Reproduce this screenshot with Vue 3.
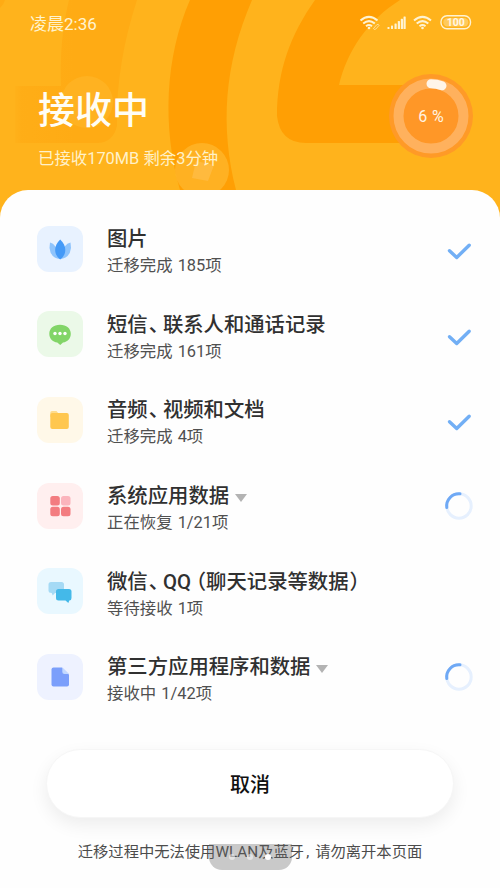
<script setup>
const items = [
  { icon: 'photo', bg: '#e8f2ff', title: ['图片'], sub: '迁移完成 185项', state: 'done' },
  { icon: 'chat', bg: '#ebf9e8', title: ['短信', '、', '联系人和通话记录'], sub: '迁移完成 161项', state: 'done' },
  { icon: 'folder', bg: '#fff8e8', title: ['音频', '、', '视频和文档'], sub: '迁移完成 4项', state: 'done' },
  { icon: 'apps', bg: '#ffefef', title: ['系统应用数据'], sub: '正在恢复 1/21项', state: 'busy', more: true },
  { icon: 'wechat', bg: '#e9f8ff', title: ['微信', '、', 'QQ', '（', '聊天记录等数据', '）'], sub: '等待接收 1项', state: '' },
  { icon: 'file', bg: '#eef2ff', title: ['第三方应用程序和数据'], sub: '接收中 1/42项', state: 'busy', more: true }
]
const partClass = (p) => ({ comma: p === '、', open: p === '（', close: p === '）' })
</script>

<template>
  <main class="screen">
    <header class="hero">
      <svg class="art" viewBox="0 0 500 220" aria-hidden="true">
        <defs>
          <linearGradient id="band" gradientUnits="userSpaceOnUse" x1="12" y1="0" x2="75" y2="0">
            <stop offset="0" stop-color="#ffab14" stop-opacity="0" />
            <stop offset=".15" stop-color="#ffab14" stop-opacity=".7" />
            <stop offset="1" stop-color="#ffab14" />
          </linearGradient>
        </defs>
        <path d="M69 0C62 28 60 55 61 86H15V143H97Q113 143 117 126C116 83 124 40 137 0Z" fill="url(#band)" />
        <path d="M190 0C165 57 162 127 180 190L184 220H250L236 190C220 127 224 65 252 0Z" fill="#ff9f04" />
        <path d="M315 0C291 34 277 70 277 116Q280 143 306 143H430V85H339C347 51 368 20 400 0Z" fill="#ff9f04" />
        <path d="M0 8Q4 4 5 0H0Z" fill="#ffab14" />
        <circle cx="87" cy="102" r="26" fill="#ffb82c" opacity=".55" />
        <circle cx="202" cy="170" r="27" fill="#ffb52b" opacity=".8" />
        <path d="M196 161L214 165L208 181L192 178Z" fill="#ffc45a" opacity=".5" />
      </svg>
      <div class="status">
        <span class="time">凌晨2:36</span>
        <svg class="signals" width="114" height="18" viewBox="0 0 114 18" fill="none" stroke="#fff3d2">
          <g stroke-width="2">
            <path d="M1.500 6.500Q10 -.8 18.500 6.500" /><path d="M4.200 9.500Q10 4.700 15.800 9.500" /><path d="M7 12.200Q10 10 13 12.200" />
          </g>
          <circle cx="10" cy="14" r="1.300" fill="#fff3d2" stroke="none" />
          <path d="M14.500 14.500l3.300-3.800q1.800-1 2.300.6l-3.300 3.800q-2 .9-2.300-.6" stroke-width="1" opacity=".65" />
          <g fill="#fff3d2" stroke="none">
            <rect x="28.500" y="13" width="2" height="2" rx=".6" /><rect x="32" y="11.500" width="2" height="3.500" rx=".6" />
            <rect x="35.500" y="9.500" width="2.200" height="5.500" rx=".6" /><rect x="38.800" y="7" width="2.200" height="8" rx=".6" />
            <rect x="41.800" y="4.800" width="2.200" height="10.200" rx=".6" /><rect x="44.500" y="2.500" width="2.200" height="12.500" rx=".6" />
          </g>
          <g stroke-width="2">
            <path d="M55 6.500Q63.500 -.8 72 6.500" /><path d="M57.700 9.500Q63.500 4.700 69.300 9.500" /><path d="M60.500 12.200Q63.500 10 66.500 12.200" />
          </g>
          <circle cx="63.500" cy="14" r="1.300" fill="#fff3d2" stroke="none" />
          <rect x="82" y="1.800" width="29.500" height="13" rx="6" stroke-width="1.400" />
          <rect x="84.300" y="4" width="25" height="8.600" rx="4.200" fill="#ffdc92" opacity=".55" stroke="none" />
          <text x="96.800" y="12.200" class="batt" text-anchor="middle" fill="#fff8e6" stroke="none">100</text>
        </svg>
      </div>
      <div class="summary">
        <div>
          <h1>接收中</h1>
          <p>已接收170MB 剩余3分钟</p>
        </div>
        <svg class="ring" width="86" height="86" viewBox="0 0 86 86">
          <circle cx="43" cy="43" r="42" fill="#ff9a27" />
          <circle cx="43" cy="43" r="32.500" fill="#ff9727" stroke="#ffb15d" stroke-width="10" />
          <path d="M43 10.800A32.200 32.200 0 0 1 54 12.800" fill="none" stroke="#fff5e9" stroke-width="9" stroke-linecap="round" />
          <text x="43" y="48.500" text-anchor="middle" class="pct">6 %</text>
        </svg>
      </div>
    </header>

    <section class="sheet">
      <ul>
        <li v-for="it in items" :key="it.icon">
          <div class="tile" :style="{ background: it.bg }">
            <svg width="46" height="46" viewBox="0 0 46 46">
              <g v-if="it.icon === 'photo'">
                <path d="M13 16.500Q20 18 23 33Q13.500 32 12.500 22Z" fill="#8fc4fc" />
                <path d="M33.500 16.500Q26 18 23 33Q33 32 34 22Z" fill="#8fc4fc" />
                <path d="M23.200 13.500C16.500 20 16.500 28 23.200 33.500C30 28 30 20 23.200 13.500Z" fill="#459af7" />
              </g>
              <g v-else-if="it.icon === 'chat'">
                <path d="M23 13.700C29.500 13.700 33.800 17.500 33.800 22.700C33.800 27.500 30.500 30.800 26 31.500L23.200 34L20.300 31.500C15.500 30.800 12.300 27.500 12.300 22.700C12.300 17.500 16.500 13.700 23 13.700Z" fill="#82d568" />
                <circle cx="18" cy="22.500" r="1.700" fill="#fff" /><circle cx="23" cy="22.500" r="1.700" fill="#fff" /><circle cx="28" cy="22.500" r="1.700" fill="#fff" />
              </g>
              <g v-else-if="it.icon === 'folder'">
                <path d="M13.300 15.500Q13.300 14 15 14H19.500L21.500 16.500H28V20H13.300Z" fill="#ffdc8d" />
                <rect x="13.300" y="16" width="18.500" height="16" rx="2" fill="#ffc74f" />
              </g>
              <g v-else-if="it.icon === 'apps'" fill="#f37c80">
                <rect x="13.300" y="13" width="9.500" height="9.500" rx="2.500" /><rect x="24" y="13" width="9.500" height="9.500" rx="2.500" fill="#fbb4bc" />
                <rect x="13.300" y="23.800" width="9.500" height="9.500" rx="2.500" /><rect x="24" y="23.800" width="9.500" height="9.500" rx="2.500" />
              </g>
              <g v-else-if="it.icon === 'wechat'">
                <path d="M14 14H24.500Q27 14 27 16.500V22.500Q27 25 24.500 25H18L15.700 27.500L14.700 25Q11.500 25 11.500 22.500V16.500Q11.500 14 14 14Z" fill="#a5daf5" />
                <path d="M21.500 21H32Q34.500 21 34.500 23.500V30Q34.500 32.500 32.300 32.500L31.300 35L28.500 32.500H21.500Q19 32.500 19 30V23.500Q19 21 21.500 21Z" fill="#44b9e9" />
              </g>
              <g v-else>
                <path d="M16.500 13.500H25L32 20.500V30.500Q32 32.500 30 32.500H16.500Q14.500 32.500 14.500 30.500V15.500Q14.500 13.500 16.500 13.500Z" fill="#7b9ffb" />
                <path d="M25.300 13.500L32 20H27.500Q25.300 20 25.300 18Z" fill="#c3d9ff" />
              </g>
            </svg>
          </div>
          <div class="text">
            <h2><span v-for="(p, i) in it.title" :key="i" :class="partClass(p)">{{ p }}</span><i v-if="it.more" class="caret"></i></h2>
            <p>{{ it.sub }}</p>
          </div>
          <svg v-if="it.state" class="mark" :class="it.state" width="30" height="30" viewBox="0 0 30 30" fill="none" stroke-linecap="round" stroke-linejoin="round">
            <path v-if="it.state === 'done'" d="M5.500 14.700L12.700 21.500L25.200 9.200" stroke="#72aff5" stroke-width="3.400" />
            <g v-else stroke-width="3">
              <circle cx="15" cy="15" r="12.200" stroke="#e6f0fe" />
              <path d="M2.800 16.500A12.200 12.200 0 0 1 16 2.800" stroke="#6fa9f5" />
            </g>
          </svg>
        </li>
      </ul>
      <button>取消</button>
      <footer>
        <span class="note">迁移过程中无法使用WLAN及蓝牙<b>,</b>请勿离开本页面</span>
        <div class="pager"><i></i><i></i><i></i></div>
      </footer>
    </section>
  </main>
</template>

<style>
body { margin: 0; background: #fff; }
</style>

<style scoped>
* { box-sizing: border-box; }
.screen { width: 500px; height: 888px; overflow: hidden; background: #ffb31c; font-family: Roboto, "Noto Sans CJK SC", sans-serif; display: flex; flex-direction: column; }
h1, h2, p, ul { margin: 0; padding: 0; font-weight: 400; }
.hero { position: relative; height: 190px; flex: none; }
.art { position: absolute; left: 0; top: 0; width: 500px; height: 220px; }
.status { position: relative; display: flex; justify-content: space-between; padding: 14px 27px 0 30px; height: 44px; }
.time { color: #fff3cf; font-size: 17px; line-height: 21px; }
.batt { font: 700 10.500px Roboto, sans-serif; }
.summary { position: relative; display: flex; justify-content: space-between; padding: 29px 26px 0 38px; }
h1 { font-size: 37px; line-height: 72px; font-weight: 500; color: #fffdf5; margin-top: 3px; }
.summary p { color: #fff1c9; font-size: 16.400px; line-height: 24px; margin-top: -1px; }
.ring { flex: none; }
.pct { font: 400 16px Roboto, sans-serif; fill: #fff4e2; word-spacing: 1px; }
.sheet { position: relative; flex: 1; background: #fefefe; border-radius: 28px 28px 0 0; display: flex; flex-direction: column; align-items: center; }
ul { list-style: none; width: 500px; padding: 16px 26px 0 37px; height: 559px; }
li { display: flex; align-items: center; height: 85.600px; }
.tile { width: 46px; height: 46px; border-radius: 12px; flex: none; }
.tile svg { display: block; }
.text { flex: 1; margin: 6px 0 0 24px; }
h2 { display: flex; align-items: center; font-size: 20.350px; line-height: 28px; font-weight: 500; color: #303030; white-space: nowrap; }
.comma, .open, .close { font-feature-settings: "halt"; }
.comma { padding: 0 4px 0 1px; }
.open { padding-left: 5px; }
.close { padding-left: 1px; }
.text p { font-size: 16.400px; line-height: 24px; color: #505050; margin-top: 1px; word-spacing: 1px; }
.caret { border: 6px solid transparent; border-top: 8px solid #b3b3b3; border-bottom: 0; margin: 3px 0 0 6px; }
.mark { margin-top: 5px; flex: none; }
.mark.busy { margin-top: 1px; }
button { width: 408px; height: 69px; border: 1px solid #f6f6f6; border-radius: 35px; background: #fff; box-shadow: 0 7px 18px rgba(0,0,0,.07); font: 500 20px/30px Roboto, "Noto Sans CJK SC", sans-serif; color: #111; padding: 3px 0 0; }
footer { position: relative; margin-top: 21px; }
.note { font-size: 15.300px; line-height: 26px; color: #4c4c4c; white-space: nowrap; display: block; }
.note b { font-weight: 400; display: inline-block; width: 11px; padding-left: 2px; }
.pager { position: absolute; left: 50%; margin-left: -41px; top: 5px; width: 83px; height: 26px; background: rgba(100,100,100,.34); border-radius: 0 0 13px 13px; display: flex; align-items: center; justify-content: center; gap: 12px; }
.pager i { width: 6px; height: 6px; border-radius: 50%; background: rgba(255,255,255,.5); }
.pager i:last-child { background: #fff; }
</style>
